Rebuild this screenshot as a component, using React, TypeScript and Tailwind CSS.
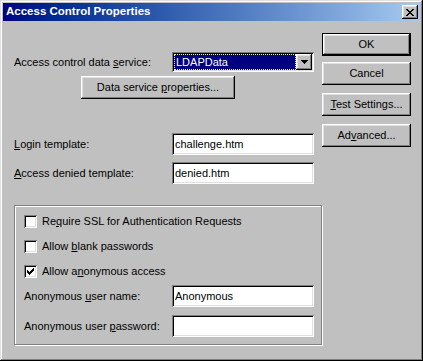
import React from 'react';

const raised =
  'bg-[#c0c0c0] shadow-[inset_-1px_-1px_#000,inset_1px_1px_#fff,inset_-2px_-2px_#808080,inset_2px_2px_#dfdfdf]';
const sunken =
  'bg-white shadow-[inset_1px_1px_#808080,inset_-1px_-1px_#fff,inset_2px_2px_#000,inset_-2px_-2px_#dfdfdf]';

function U({ children }: { children: React.ReactNode }) {
  return <span className="underline underline-offset-[1px]">{children}</span>;
}

function Button({
  children,
  className = '',
  isDefault = false,
}: {
  children: React.ReactNode;
  className?: string;
  isDefault?: boolean;
}) {
  if (isDefault) {
    return (
      <div className={`h-[23px] border border-black ${className}`}>
        <div className={`h-full flex items-center justify-center ${raised}`}>{children}</div>
      </div>
    );
  }
  return <div className={`h-[23px] flex items-center justify-center ${raised} ${className}`}>{children}</div>;
}

function TextBox({ value, className = '' }: { value?: string; className?: string }) {
  return (
    <div className={`h-[22px] w-[142px] ${sunken} flex items-center pl-[3px] ${className}`}>
      <span className="leading-none">{value}</span>
    </div>
  );
}

function CheckBox({ checked, children }: { checked?: boolean; children: React.ReactNode }) {
  return (
    <div className="flex items-center h-[13px]">
      <div className={`w-[13px] h-[13px] ${sunken} flex items-center justify-center`}>
        {checked && (
          <svg width="7" height="7" viewBox="0 0 7 7" shapeRendering="crispEdges">
            <path
              d="M6 0h1v3H6zM5 1h1v3H5zM0 2h1v3H0zM1 3h1v3H1zM4 2h1v3H4zM3 3h1v3H3zM2 4h1v3H2z"
              fill="#000"
            />
          </svg>
        )}
      </div>
      <span className="ml-[5px]">{children}</span>
    </div>
  );
}

export default function App() {
  return (
    <div
      className="w-[423px] h-[361px] bg-[#c0c0c0] p-[3px] flex flex-col text-[11px] text-black shadow-[inset_-1px_-1px_#000,inset_1px_1px_#dfdfdf,inset_-2px_-2px_#808080,inset_2px_2px_#fff]"
      style={{ fontFamily: '"Liberation Sans", Arial, sans-serif' }}
    >
      {/* Title bar */}
      <div className="h-[18px] flex items-center bg-gradient-to-r from-[#000080] to-[#a6caf0] pl-[3px] pr-[2px]">
        <span className="text-white font-bold text-[11.5px] flex-1">Access Control Properties</span>
        <div className={`w-[16px] h-[14px] flex items-center justify-center ${raised}`}>
          <svg width="8" height="7" viewBox="0 0 8 7" shapeRendering="crispEdges">
            <path
              d="M0 0h2v1H0zM6 0h2v1H6zM1 1h2v1H1zM5 1h2v1H5zM2 2h4v1H2zM3 3h2v1H3zM2 4h4v1H2zM1 5h2v1H1zM5 5h2v1H5zM0 6h2v1H0zM6 6h2v1H6z"
              fill="#000"
            />
          </svg>
        </div>
      </div>

      {/* Body */}
      <div className="flex-1 flex pl-[11px]">
        <div className="w-[308px] flex flex-col">
          <div className="mt-[31px] h-[20px] flex items-center">
            <span className="w-[158px]">
              Access control data <U>s</U>ervice:
            </span>
            <div className={`w-[142px] h-[20px] ${sunken} p-[2px] flex`}>
              <div className="flex-1 bg-[#000080] border border-dotted border-[#ffff80] flex items-center pl-[1px] text-white">
                LDAPData
              </div>
              <div className={`w-[16px] h-[16px] flex items-center justify-center ${raised}`}>
                <svg width="7" height="4" viewBox="0 0 7 4" shapeRendering="crispEdges">
                  <path d="M0 0h7v1H0zM1 1h5v1H1zM2 2h3v1H2zM3 3h1v1H3z" fill="#000" />
                </svg>
              </div>
            </div>
          </div>

          <Button className="mt-[4px] ml-[67px] w-[154px]">
            <span>
              Data service <U>p</U>roperties...
            </span>
          </Button>

          <div className="mt-[34px] flex items-center">
            <span className="w-[158px]">
              <U>L</U>ogin template:
            </span>
            <TextBox value="challenge.htm" />
          </div>

          <div className="mt-[7px] flex items-center">
            <span className="w-[158px]">
              <U>A</U>ccess denied template:
            </span>
            <TextBox value="denied.htm" />
          </div>

          <div className="mt-[21px] h-[140px] border border-[#808080] shadow-[inset_1px_1px_#fff,1px_1px_#fff] pl-[9px] pt-[9px] flex flex-col">
            <CheckBox>
              Re<U>q</U>uire SSL for Authentication Requests
            </CheckBox>
            <div className="mt-[12px]">
              <CheckBox>
                Allow <U>b</U>lank passwords
              </CheckBox>
            </div>
            <div className="mt-[12px]">
              <CheckBox checked>
                Allow a<U>n</U>onymous access
              </CheckBox>
            </div>
            <div className="mt-[7px] flex items-center">
              <span className="w-[148px]">
                Anonymous <U>u</U>ser name:
              </span>
              <TextBox value="Anonymous" />
            </div>
            <div className="mt-[8px] flex items-center">
              <span className="w-[148px]">
                Anonymous user <U>p</U>assword:
              </span>
              <TextBox />
            </div>
          </div>
        </div>

        <div className="w-[89px] flex flex-col">
          <Button isDefault className="mt-[12px]">
            OK
          </Button>
          <Button className="mt-[6px]">Cancel</Button>
          <Button className="mt-[8px]">
            <span>
              <U>T</U>est Settings...
            </span>
          </Button>
          <Button className="mt-[8px]">
            <span>
              Ad<U>v</U>anced...
            </span>
          </Button>
        </div>
      </div>
    </div>
  );
}
